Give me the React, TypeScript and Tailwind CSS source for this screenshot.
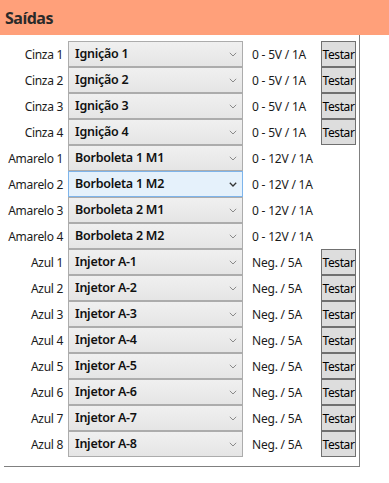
import React from "react";

type Row = { label: string; value: string; spec: string; test: boolean; active?: boolean };

const rows: Row[] = [
  { label: "Cinza 1", value: "Ignição 1", spec: "0 - 5V / 1A", test: true },
  { label: "Cinza 2", value: "Ignição 2", spec: "0 - 5V / 1A", test: true },
  { label: "Cinza 3", value: "Ignição 3", spec: "0 - 5V / 1A", test: true },
  { label: "Cinza 4", value: "Ignição 4", spec: "0 - 5V / 1A", test: true },
  { label: "Amarelo 1", value: "Borboleta 1 M1", spec: "0 - 12V / 1A", test: false },
  { label: "Amarelo 2", value: "Borboleta 1 M2", spec: "0 - 12V / 1A", test: false, active: true },
  { label: "Amarelo 3", value: "Borboleta 2 M1", spec: "0 - 12V / 1A", test: false },
  { label: "Amarelo 4", value: "Borboleta 2 M2", spec: "0 - 12V / 1A", test: false },
  { label: "Azul 1", value: "Injetor A-1", spec: "Neg. / 5A", test: true },
  { label: "Azul 2", value: "Injetor A-2", spec: "Neg. / 5A", test: true },
  { label: "Azul 3", value: "Injetor A-3", spec: "Neg. / 5A", test: true },
  { label: "Azul 4", value: "Injetor A-4", spec: "Neg. / 5A", test: true },
  { label: "Azul 5", value: "Injetor A-5", spec: "Neg. / 5A", test: true },
  { label: "Azul 6", value: "Injetor A-6", spec: "Neg. / 5A", test: true },
  { label: "Azul 7", value: "Injetor A-7", spec: "Neg. / 5A", test: true },
  { label: "Azul 8", value: "Injetor A-8", spec: "Neg. / 5A", test: true },
];

function Chevron({ dark }: { dark?: boolean }) {
  return (
    <svg width="8" height="5" viewBox="0 0 8 5" className="shrink-0">
      <path
        d="M0.8 0.8 L4 4 L7.2 0.8"
        fill="none"
        stroke={dark ? "#333333" : "#8a8a8a"}
        strokeWidth={dark ? 1.3 : 1}
      />
    </svg>
  );
}

export default function App() {
  return (
    <div
      className="w-[389px] h-[483px] bg-white text-[#1b1b1b]"
      style={{ fontFamily: "'Noto Sans', 'Open Sans', sans-serif" }}
    >
      <div className="h-[35px] bg-[#ffa07a] flex items-center px-[5px]">
        <span className="text-[16px] font-bold text-[#2a2a2a] leading-none tracking-[-0.5px] pt-[1px]">
          Saídas
        </span>
      </div>
      <div className="ml-[4px] w-[356px] border-r border-b border-[#808080] pt-[6px] pb-[9px]">
        {rows.map((r) => (
          <div key={r.label} className="flex items-center h-[26px]">
            <div className="w-[59px] text-right text-[12px] leading-none tracking-[-0.3px] pt-[2px]">
              {r.label}
            </div>
            <div
              className={
                "ml-[5px] w-[175px] h-[26px] flex items-center justify-between pl-[6px] pr-[5px] border " +
                (r.active
                  ? "border-[#7eb4ea] bg-[#e5f1fb]"
                  : "border-[#acacac] bg-gradient-to-b from-[#f0f0f0] to-[#e5e5e5]")
              }
            >
              <span className="text-[12.5px] font-semibold leading-none text-[#111] tracking-[-0.25px] pt-[1px]">
                {r.value}
              </span>
              <Chevron dark={r.active} />
            </div>
            <div className="ml-[9px] w-[69px] text-[12px] leading-none tracking-[-0.2px] pt-[2px]">
              {r.spec}
            </div>
            {r.test && (
              <div className="w-[35px] h-[26px] border border-[#707070] bg-[#dddddd] flex items-center justify-center text-[12px] leading-none tracking-[-0.4px] text-black pt-[2px]">
                Testar
              </div>
            )}
          </div>
        ))}
      </div>
    </div>
  );
}
